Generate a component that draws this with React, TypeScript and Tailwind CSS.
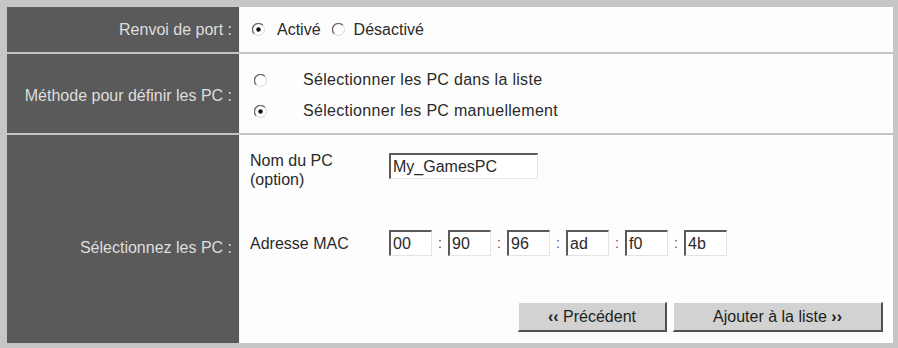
import React from 'react';

function Radio({ checked }: { checked?: boolean }) {
  return (
    <svg width="13" height="13" viewBox="0 0 13 13" className="shrink-0">
      <circle cx="6.5" cy="6.5" r="6" fill="#ffffff" stroke="#dadada" />
      <path d="M2.2 10.8 A6 6 0 0 1 10.8 2.2" stroke="#6e6e6e" strokeWidth="1.4" fill="none" />
      {checked && <circle cx="6.5" cy="6.5" r="2.2" fill="#111111" />}
    </svg>
  );
}

function Field({ value, className }: { value: string; className: string }) {
  return (
    <div
      className={`h-[26px] bg-white border-t-2 border-l-2 border-b border-r border-t-[#5a5a5a] border-l-[#5a5a5a] border-b-[#e4e4e4] border-r-[#e4e4e4] pl-[2px] flex items-center text-[16px] text-[#2a2a2a] leading-none ${className}`}
    >
      {value}
    </div>
  );
}

function Btn({ children, className }: { children: React.ReactNode; className: string }) {
  return (
    <button
      type="button"
      className={`h-[30px] bg-[#d2d2d2] border-t border-l border-t-white border-l-white border-b-2 border-r-2 border-b-[#505050] border-r-[#505050] text-[16px] text-[#1e1e1e] leading-none ${className}`}
    >
      {children}
    </button>
  );
}

export default function App() {
  const mac = ['00', '90', '96', 'ad', 'f0', '4b'];
  return (
    <div
      className="w-[898px] h-[348px] bg-[#c6c6c6] pl-[7px] pt-[7px] pr-[5px] pb-[5px]"
      style={{ fontFamily: '"Liberation Sans", Arial, sans-serif' }}
    >
      <div className="flex flex-col h-full bg-[#c4c4c4] gap-[2px]">
        {/* Renvoi de port */}
        <div className="flex h-[45px] shrink-0">
          <div className="w-[232px] bg-[#5a5a5a] text-[#dedede] text-[16px] flex items-center justify-end pr-[7px]">
            Renvoi de port :
          </div>
          <div className="w-px bg-[#f4f4f4]" />
          <div className="flex-1 bg-[#fdfdfd] flex items-center pl-[12px] text-[16px] text-[#2a2a2a]">
            <Radio checked />
            <span className="ml-[12px]">Activé</span>
            <span className="ml-[11px]">
              <Radio />
            </span>
            <span className="ml-[9px]">Désactivé</span>
          </div>
        </div>

        {/* Méthode */}
        <div className="flex h-[79px] shrink-0">
          <div className="w-[232px] bg-[#5a5a5a] text-[#dedede] text-[16px] flex items-center justify-end pr-[7px] pt-[4px]">
            Méthode pour définir les PC :
          </div>
          <div className="w-px bg-[#f4f4f4]" />
          <div className="flex-1 bg-[#fdfdfd] flex flex-col justify-center gap-[12px] pl-[14px] pt-[4px] text-[16px] text-[#2a2a2a]">
            <div className="flex items-center h-[19px]">
              <Radio />
              <span className="ml-[36px] tracking-[0.3px]">Sélectionner les PC dans la liste</span>
            </div>
            <div className="flex items-center h-[19px]">
              <Radio checked />
              <span className="ml-[36px] tracking-[0.3px]">Sélectionner les PC manuellement</span>
            </div>
          </div>
        </div>

        {/* Sélectionnez les PC */}
        <div className="flex flex-1">
          <div className="w-[232px] bg-[#5a5a5a] text-[#dedede] text-[16px] flex items-center justify-end pr-[7px] pt-[18px]">
            Sélectionnez les PC :
          </div>
          <div className="w-px bg-[#f4f4f4]" />
          <div className="flex-1 bg-[#fdfdfd] flex flex-col pl-[10px] pt-[16px] text-[16px] text-[#2a2a2a]">
            <div className="flex items-start">
              <div className="w-[139px] leading-[19px]">
                Nom du PC
                <br />
                (option)
              </div>
              <Field value="My_GamesPC" className="w-[149px] mt-[2px]" />
            </div>
            <div className="flex items-center mt-[41px]">
              <div className="w-[139px] pt-[2px]">Adresse MAC</div>
              {mac.map((m, i) => (
                <React.Fragment key={m}>
                  {i > 0 && <span className="w-[16px] text-center text-[14px] text-[#555]">:</span>}
                  <Field value={m} className="w-[43px]" />
                </React.Fragment>
              ))}
            </div>
            <div className="flex justify-end gap-[6px] mt-[46px] pr-[10px]">
              <Btn className="w-[149px]">
                <span className="font-bold">‹‹</span> Précédent
              </Btn>
              <Btn className="w-[210px]">
                Ajouter à la liste <span className="font-bold">››</span>
              </Btn>
            </div>
          </div>
        </div>
      </div>
    </div>
  );
}
